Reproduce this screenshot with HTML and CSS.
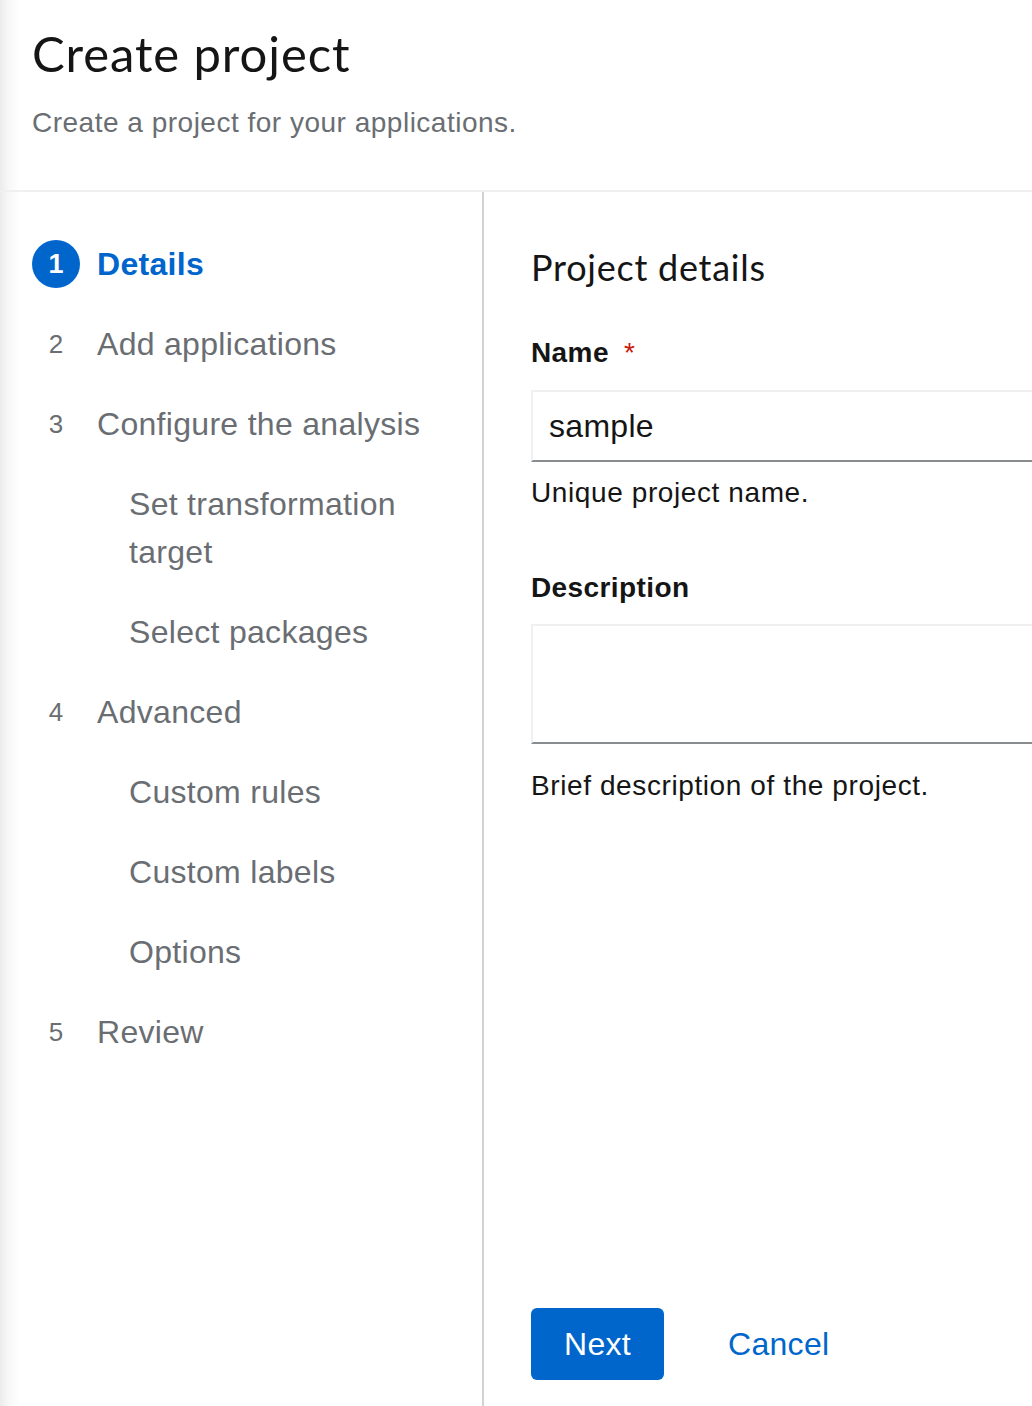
FILE: index.html
```html
<!DOCTYPE html>
<html lang="en">
<head>
<meta charset="utf-8">
<title>Create project</title>
<link rel="stylesheet" href="styles.css">
</head>
<body>
<header class="page-header">
  <h1 class="page-title">Create project</h1>
  <p class="page-subtitle">Create a project for your applications.</p>
</header>
<div class="wizard">
  <nav class="wizard-nav">
    <ol class="steps">
      <li class="step current"><span class="num">1</span><span class="label">Details</span></li>
      <li class="step"><span class="num">2</span><span class="label">Add applications</span></li>
      <li class="step"><span class="num">3</span><span class="label">Configure the analysis</span></li>
      <li class="substep"><span class="label">Set transformation target</span></li>
      <li class="substep"><span class="label">Select packages</span></li>
      <li class="step"><span class="num">4</span><span class="label">Advanced</span></li>
      <li class="substep"><span class="label">Custom rules</span></li>
      <li class="substep"><span class="label">Custom labels</span></li>
      <li class="substep"><span class="label">Options</span></li>
      <li class="step"><span class="num">5</span><span class="label">Review</span></li>
    </ol>
  </nav>
  <main class="wizard-main">
    <h2 class="section-title">Project details</h2>
    <form class="form">
      <div class="field field-name">
        <label class="field-label" for="name">Name<span class="required">*</span></label>
        <input class="text-input" id="name" type="text" value="sample">
        <p class="helper">Unique project name.</p>
      </div>
      <div class="field field-desc">
        <label class="field-label" for="desc">Description</label>
        <textarea class="text-area" id="desc"></textarea>
        <p class="helper helper-desc">Brief description of the project.</p>
      </div>
    </form>
    <footer class="wizard-footer">
      <button class="btn btn-primary" type="button">Next</button>
      <button class="btn btn-link" type="button">Cancel</button>
    </footer>
  </main>
</div>
</body>
</html>
```

FILE: styles.css
```css
* { box-sizing: border-box; }

html, body {
  margin: 0;
  padding: 0;
}

body {
  font-family: "Liberation Sans", Arial, sans-serif;
  color: #151515;
  background: linear-gradient(to right, #ebebeb 0, #f7f7f7 8px, #ffffff 20px);
  overflow: hidden;
  height: 100vh;
}

.page-header {
  padding: 24px 32px 45px 32px;
  border-bottom: 2px solid #f0f0f0;
}

.page-title {
  margin: 0;
  font-family: Lato, "Open Sans", sans-serif;
  font-weight: 400;
  font-size: 49px;
  line-height: 59px;
  letter-spacing: 0.9px;
  color: #151515;
}

.page-subtitle {
  margin: 18px 0 0 0;
  font-size: 28px;
  line-height: 44px;
  letter-spacing: 0.5px;
  color: #6a6e73;
}

.wizard {
  display: flex;
  height: calc(100vh - 192px);
}

.wizard-nav {
  width: 484px;
  flex: none;
  border-right: 2px solid #d2d2d2;
  padding: 32px 32px 0 0;
}

.steps {
  list-style: none;
  margin: 0;
  padding: 0;
}

.step,
.substep {
  display: flex;
  align-items: flex-start;
  padding: 16px 0;
  font-size: 32px;
  line-height: 48px;
  letter-spacing: 0.3px;
  color: #6a6e73;
}

.step {
  padding-left: 32px;
}

.substep {
  padding-left: 129px;
}

.num {
  flex: none;
  width: 48px;
  height: 48px;
  margin-right: 17px;
  text-align: center;
  font-size: 26px;
  line-height: 48px;
  letter-spacing: 0;
  color: #6a6e73;
}

.step.current .num {
  background: #0066cc;
  border-radius: 50%;
  color: #ffffff;
  font-weight: 700;
  font-size: 27px;
}

.step.current .label {
  color: #0066cc;
  font-weight: 700;
}

.wizard-main {
  flex: 1;
  min-width: 0;
  overflow: hidden;
  display: flex;
  flex-direction: column;
  padding: 48px 0 26px 47px;
}

.section-title {
  margin: 0;
  font-family: Lato, "Open Sans", sans-serif;
  font-weight: 400;
  font-size: 36px;
  line-height: 54px;
  letter-spacing: 0.75px;
  color: #151515;
}

.form {
  width: 640px;
  margin-top: 38px;
}

.field {
  display: flex;
  flex-direction: column;
}

.field-desc {
  margin-top: 53px;
}

.field-label {
  font-size: 28px;
  line-height: 42px;
  font-weight: 700;
  letter-spacing: 0.4px;
  color: #151515;
}

.required {
  margin-left: 15px;
  color: #c9190b;
  font-weight: 400;
}

.text-input,
.text-area {
  display: block;
  width: 100%;
  margin-top: 16px;
  border: 2px solid #f0f0f0;
  border-bottom-color: #8a8d90;
  border-radius: 0;
  background: #ffffff;
  font-family: "Liberation Sans", Arial, sans-serif;
  font-size: 32px;
  letter-spacing: 0.3px;
  color: #151515;
  outline: none;
}

.text-input {
  height: 72px;
  padding: 0 16px;
}

.text-area {
  height: 120px;
  margin-top: 15px;
  padding: 12px 16px;
  resize: none;
}

.helper {
  margin: 10px 0 0 0;
  font-size: 28px;
  line-height: 42px;
  letter-spacing: 0.6px;
  color: #151515;
}

.helper-desc {
  margin-top: 21px;
}

.wizard-footer {
  margin-top: auto;
  display: flex;
  align-items: center;
  gap: 32px;
}

.btn {
  height: 72px;
  padding: 0 33px;
  border: 0;
  border-radius: 6px;
  font-family: "Liberation Sans", Arial, sans-serif;
  font-size: 32px;
  line-height: 72px;
  letter-spacing: 0.3px;
  cursor: pointer;
}

.btn-primary {
  background: #0066cc;
  color: #ffffff;
}

.btn-link {
  background: transparent;
  color: #0066cc;
  padding: 0 32px;
}
```
